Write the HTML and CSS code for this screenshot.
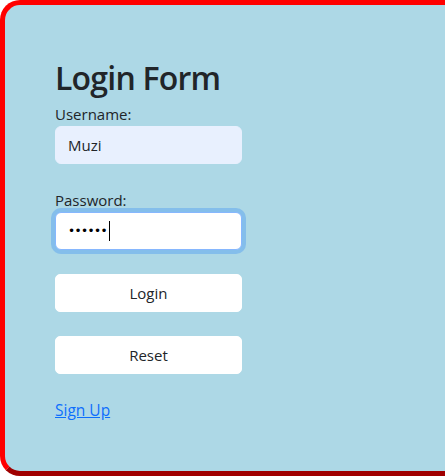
FILE: index.html
```html
<!DOCTYPE html>
<html lang="en">
<head>
<meta charset="utf-8">
<title>Login Form</title>
<link rel="stylesheet" href="styles.css">
</head>
<body>
<div class="frame">
  <form class="login-form">
    <h2 class="title">Login Form</h2>
    <div class="group">
      <label class="label" for="username">Username:</label>
      <input class="field field-autofill" id="username" type="text" value="Muzi">
    </div>
    <div class="group">
      <label class="label" for="password">Password:</label>
      <div class="field field-focus"><span class="dots">••••••</span><span class="caret"></span></div>
    </div>
    <div class="group">
      <button class="btn" type="button">Login</button>
    </div>
    <div class="group">
      <button class="btn" type="button">Reset</button>
    </div>
    <a class="link" href="#">Sign Up</a>
  </form>
</div>
</body>
</html>
```
FILE: styles.css
```css
html, body {
  margin: 0;
  padding: 0;
  overflow: hidden;
}
body {
  font-family: "Open Sans", "Noto Sans", sans-serif;
  color: #212529;
  font-size: 15px;
  line-height: 24px;
}
.frame {
  box-sizing: border-box;
  width: 445px;
  height: 476px;
  background: #add8e6;
  border: 5px solid red;
  border-right: 0;
  border-bottom-color: #a00000;
  border-radius: 20px 0 0 20px;
  padding: 54px 50px 0 50px;
}
.login-form {
  width: 187px;
}
.title {
  font-size: 32px;
  font-weight: 600;
  letter-spacing: -0.8px;
  line-height: 38px;
  margin: 0 0 5px 0;
}
.group {
  margin-bottom: 24px;
}
.label {
  display: block;
  height: 24px;
}
.field {
  box-sizing: border-box;
  display: flex;
  align-items: center;
  width: 187px;
  height: 38px;
  padding: 0 12px;
  border: 1px solid #dee2e6;
  border-radius: 6px;
  background: #fff;
  font-family: inherit;
  font-size: 15px;
  color: #212529;
  outline: none;
}
.field-autofill {
  background: #e8f0fe;
  border-color: #e8f0fe;
}
.field-focus {
  border-color: #86b7fe;
  box-shadow: 0 0 0 4px rgba(13, 110, 253, 0.25);
}
.dots {
  font-size: 12px;
  letter-spacing: -0.6px;
  font-family: "DejaVu Sans", sans-serif;
  color: #000;
}
.caret {
  display: inline-block;
  width: 1px;
  height: 20px;
  background: #000;
  margin-left: 2px;
}
.btn {
  display: block;
  box-sizing: border-box;
  width: 187px;
  height: 38px;
  border: 1px solid #fff;
  border-radius: 5px;
  background: #fff;
  font-family: inherit;
  font-size: 15px;
  color: #212529;
  padding: 0;
}
.link {
  color: #0d6efd;
  text-decoration: underline;
  font-size: 15.5px;
}
```
